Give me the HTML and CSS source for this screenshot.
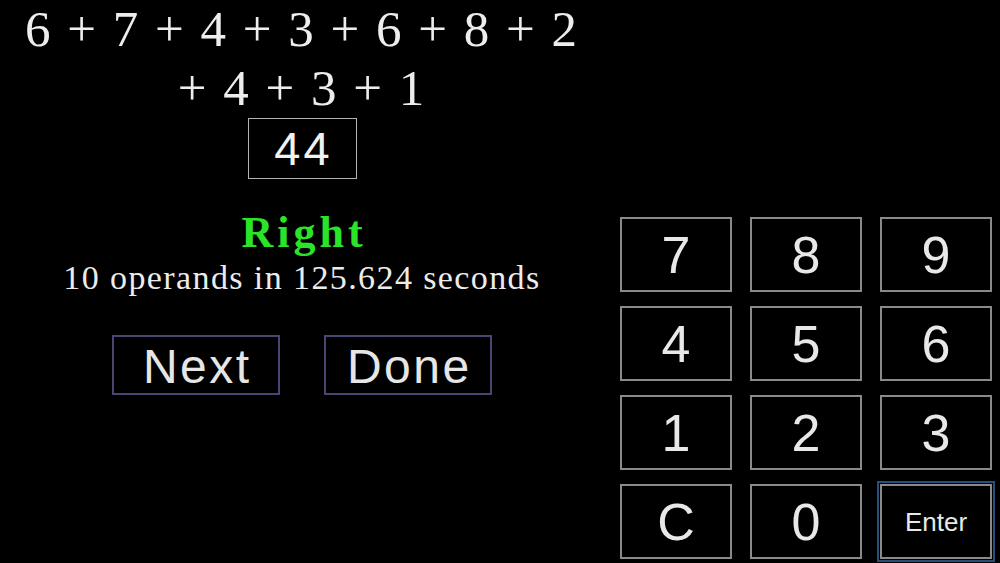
FILE: index.html
```html
<!DOCTYPE html>
<html lang="en">
<head>
<meta charset="utf-8">
<title>Addition Drill</title>
<link rel="stylesheet" href="styles.css">
</head>
<body>
<div class="app">
  <section class="problem">
    <div class="equation">6 +&nbsp;7 +&nbsp;4 +&nbsp;3 +&nbsp;6 +&nbsp;8 +&nbsp;2 +&nbsp;4 +&nbsp;3 +&nbsp;1</div>
    <div class="answer">44</div>
    <div class="verdict">Right</div>
    <div class="stats">10 operands in 125.624 seconds</div>
    <div class="actions">
      <button class="action">Next</button>
      <button class="action">Done</button>
    </div>
  </section>
  <section class="keypad">
    <button class="key">7</button>
    <button class="key">8</button>
    <button class="key">9</button>
    <button class="key">4</button>
    <button class="key">5</button>
    <button class="key">6</button>
    <button class="key">1</button>
    <button class="key">2</button>
    <button class="key">3</button>
    <button class="key">C</button>
    <button class="key">0</button>
    <button class="key key-enter">Enter</button>
  </section>
</div>
</body>
</html>
```

FILE: styles.css
```css
html, body {
  margin: 0;
  padding: 0;
  background: #000;
}

.app {
  display: flex;
  height: 563px;
  width: 1000px;
  overflow: hidden;
}

.problem {
  width: 604px;
  display: flex;
  flex-direction: column;
  align-items: center;
  color: #ededed;
}

.equation {
  width: 600px;
  font-family: "Liberation Serif", "Times New Roman", serif;
  font-size: 51px;
  line-height: 59px;
  letter-spacing: 2px;
  text-align: center;
}

.answer {
  box-sizing: border-box;
  width: 109px;
  height: 61px;
  border: 1px solid #b3b3b3;
  font-family: "Liberation Sans", Arial, sans-serif;
  font-size: 47px;
  line-height: 59px;
  letter-spacing: 3px;
  text-indent: 3px;
  text-align: center;
  color: #f2f2f2;
}

.verdict {
  margin-top: 28px;
  font-family: "Liberation Serif", "Times New Roman", serif;
  font-weight: bold;
  font-size: 44px;
  line-height: 51px;
  letter-spacing: 4px;
  text-indent: 4px;
  color: #2ae42a;
}

.stats {
  font-family: "Liberation Serif", "Times New Roman", serif;
  font-size: 34px;
  line-height: 40px;
  letter-spacing: 1.4px;
  color: #ececec;
}

.actions {
  margin-top: 37px;
  display: flex;
  gap: 44px;
}

.action {
  box-sizing: border-box;
  width: 168px;
  height: 60px;
  padding: 4px 0 0;
  margin: 0;
  border: 2px solid #4a4674;
  background: #000;
  color: #e6e6e6;
  font-family: "Liberation Sans", Arial, sans-serif;
  font-size: 48px;
  line-height: 52px;
  letter-spacing: 2.5px;
  text-indent: 2.5px;
}

.keypad {
  align-self: flex-end;
  margin: 0 0 4px 16px;
  display: grid;
  grid-template-columns: repeat(3, 112px);
  grid-auto-rows: 75px;
  column-gap: 18px;
  row-gap: 14px;
}

.key {
  box-sizing: border-box;
  margin: 0;
  padding: 0;
  border: 2px solid #8a8a8a;
  background: #000;
  color: #e8e8e8;
  font-family: "Liberation Sans", Arial, sans-serif;
  font-size: 52px;
  line-height: 1;
  display: flex;
  align-items: center;
  justify-content: center;
}

.key-enter {
  font-size: 26px;
  outline: 2px solid #25507c;
  outline-offset: 1px;
}
```
